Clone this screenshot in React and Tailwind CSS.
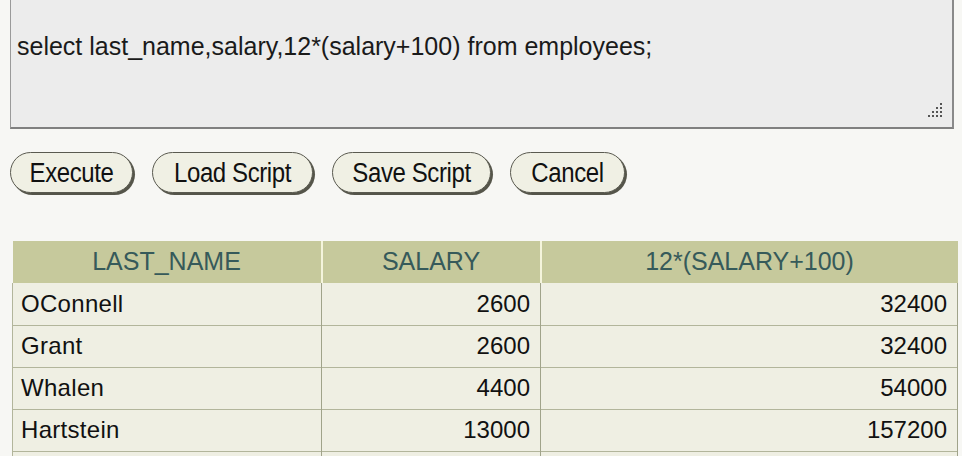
const rows = [
  { name: "OConnell", salary: 2600, annual: 32400 },
  { name: "Grant", salary: 2600, annual: 32400 },
  { name: "Whalen", salary: 4400, annual: 54000 },
  { name: "Hartstein", salary: 13000, annual: 157200 },
  { name: "", salary: "", annual: "" },
];

function PillButton({ children, width }) {
  return (
    <button
      type="button"
      className={`h-[41px] rounded-full border border-[#5a5a50] bg-[#f0f0e4] shadow-[2px_2px_0_#55554a] text-[24px] leading-none text-[#111] tracking-[-0.4px] ${width}`}
    >
      <span className="inline-block scale-y-115">{children}</span>
    </button>
  );
}

function Grip() {
  // resize handle dots, bottom-right of the text area
  const dots = [
    [12, 0],
    [8, 4], [12, 4],
    [4, 8], [8, 8], [12, 8],
    [0, 12], [4, 12], [8, 12], [12, 12],
  ];
  return (
    <svg width="16" height="16" viewBox="0 0 16 16" className="absolute right-[8px] bottom-[8px]">
      {dots.map(([x, y], i) => (
        <rect key={i} x={x} y={y} width="2" height="2" fill="#555" />
      ))}
    </svg>
  );
}

export default function App() {
  return (
    <div className="w-[962px] h-[456px] overflow-hidden bg-[#f7f7f4] font-['Liberation_Sans',Arial,sans-serif]">
      <div className="ml-[10px] mr-[8px] h-[129px] relative bg-[#ececec] border-l border-r-2 border-b-2 border-l-[#9a9a9a] border-r-[#8a8a8a] border-b-[#808080]">
        <p className="pl-[6px] pt-[30px] text-[25px] leading-[32px] text-[#1a1a1a]">
          select last_name,salary,12*(salary+100) from employees;
        </p>
        <Grip />
      </div>

      <div className="flex gap-[19px] pl-[10px] mt-[23px]">
        <PillButton width="w-[123px]">Execute</PillButton>
        <PillButton width="w-[161px]">Load Script</PillButton>
        <PillButton width="w-[159px]">Save Script</PillButton>
        <PillButton width="w-[115px]">Cancel</PillButton>
      </div>

      <table className="ml-[12px] mt-[48px] w-[946px] border-collapse table-fixed">
        <colgroup>
          <col className="w-[309px]" />
          <col className="w-[219px]" />
          <col />
        </colgroup>
        <thead>
          <tr className="h-[42px] bg-[#c6c99c] text-[#365a5a] text-[25px] font-normal">
            <th className="font-normal border-r-2 border-r-[#f4f4dc]">LAST_NAME</th>
            <th className="font-normal border-r-2 border-r-[#f4f4dc]">SALARY</th>
            <th className="font-normal">12*(SALARY+100)</th>
          </tr>
        </thead>
        <tbody className="bg-[#efefe3] text-[24px] text-[#111]">
          {rows.map((r, i) => (
            <tr key={i} className="h-[42px] border-b border-[#b2b59b]">
              <td className="pl-[8px] border-l border-[#b2b59b] tracking-[0.3px]">{r.name}</td>
              <td className="pr-[10px] text-right border-l border-[#a0a38a]">{r.salary}</td>
              <td className="pr-[10px] text-right border-l border-[#a0a38a] border-r">{r.annual}</td>
            </tr>
          ))}
        </tbody>
      </table>
    </div>
  );
}
